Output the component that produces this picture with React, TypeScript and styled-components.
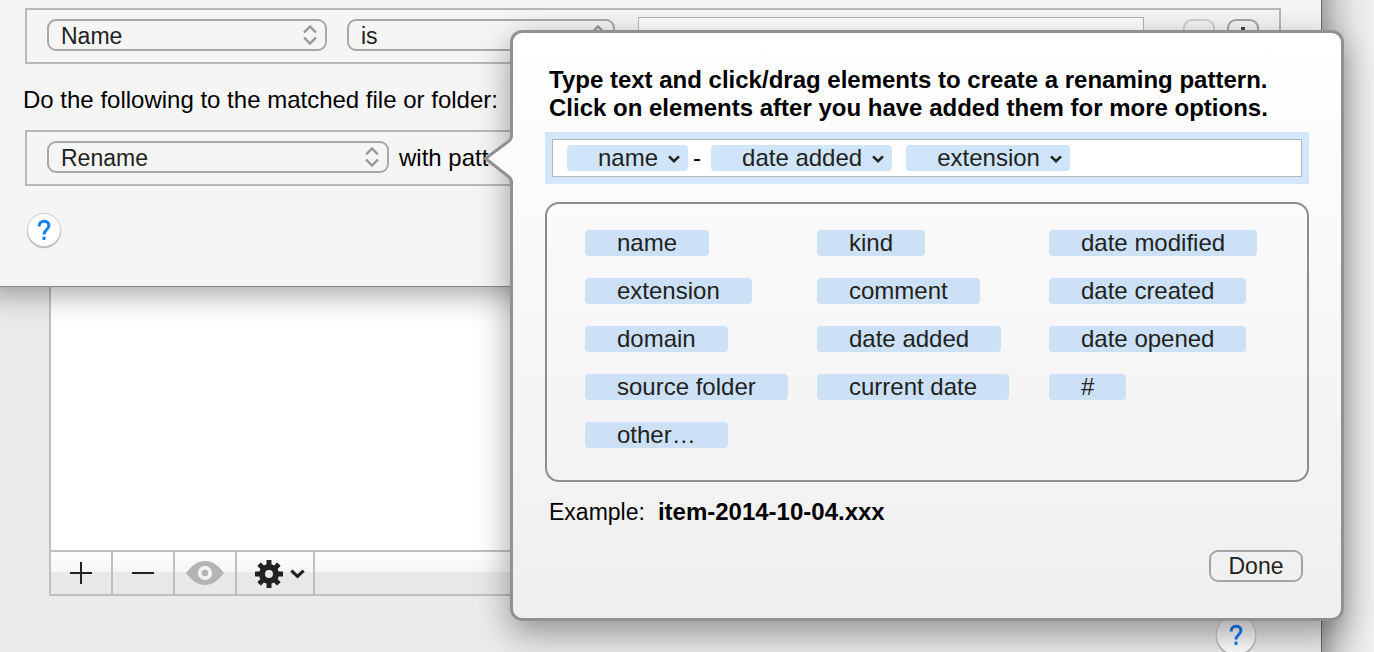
import React from "react";
import styled, { createGlobalStyle } from "styled-components";

const GlobalStyle = createGlobalStyle`
  *, *::before, *::after { box-sizing: border-box; }
  body {
    margin: 0;
    font-family: "Liberation Sans", Arial, Helvetica, sans-serif;
    font-size: 24px;
    line-height: 28px;
    color: #000;
    background: #f3f3f3;
  }
  button, select, input { font: inherit; color: inherit; margin: 0; }
`;

const Desktop = styled.div`
  position: relative;
  display: flex;
  min-height: 100vh;
  padding-right: 52px;
  overflow: hidden;
  background: linear-gradient(to left, #f1f1f1 0, #e6e6e6 20px, #d0d0d0 36px, #a8a8a8 52px);
`;

const Window = styled.main`
  display: flex;
  flex: 1;
  flex-direction: column;
  min-width: 0;
  overflow: hidden;
  background: #ebebeb;
  border-right: 1px solid #6e6e6e;
`;

const Sheet = styled.section`
  position: relative;
  padding: 8px 40px 39px 22px;
  background: #f5f5f5;
  border-bottom: 1px solid #8a8a8a;
  box-shadow: 0 -14px 30px 20px rgba(0, 0, 0, 0.38);
`;

const RuleBox = styled.div`
  display: flex;
  align-items: center;
  height: 56px;
  margin-left: 3px;
  padding: 0 20px 2px;
  border: 2px solid #b8b8b8;
  white-space: nowrap;
`;

const SheetLabel = styled.p`
  margin: 22px 0 16px 1px;
`;

const PopUpFrame = styled.span<{ $width: number }>`
  position: relative;
  flex: none;
  width: ${(p) => p.$width}px;
  height: 32px;
  margin-right: ${(p) => (p.$width > 300 ? 10 : 20)}px;
`;

const PopUpSelect = styled.select`
  display: block;
  width: 100%;
  height: 32px;
  padding: 2px 40px 0 12px;
  appearance: none;
  font-size: 23px;
  line-height: 26px;
  color: #222;
  background: transparent;
  border: 2px solid #a9a9a9;
  border-radius: 9px;
`;

const PopUpArrows = styled.svg`
  position: absolute;
  top: 6px;
  right: 10px;
  width: 14px;
  height: 20px;
  pointer-events: none;
`;

const RuleText = styled.span`
  padding-top: 2px;
`;

const ValueInput = styled.input`
  flex: 1;
  min-width: 0;
  height: 36px;
  margin: 0 39px 0 3px;
  padding: 0 8px;
  background: #fff;
  border: 1px solid #b5b5b5;
`;

const RuleButton = styled.button<{ $faint?: boolean }>`
  display: grid;
  place-items: center;
  flex: none;
  width: 32px;
  height: 32px;
  margin-right: ${(p) => (p.$faint ? 12 : 0)}px;
  padding: 0;
  background: transparent;
  border: 2px solid ${(p) => (p.$faint ? "#cfcfcf" : "#a6a6a6")};
  border-radius: 9px;
`;

const HelpButton = styled.button<{ $size: number }>`
  display: grid;
  place-items: center;
  flex: none;
  width: ${(p) => p.$size}px;
  height: ${(p) => p.$size}px;
  padding: 0;
  background: #fff;
  border: 1px solid #cfcfcf;
  border-radius: 50%;
  box-shadow: 0 1px 1px rgba(0, 0, 0, 0.3);
`;

const SheetHelp = styled.div`
  margin: 27px 0 0 5px;
`;

const ListPane = styled.div`
  flex: 1;
  min-height: 263px;
  margin: 0 40px 0 49px;
  background: #fff;
  border: solid #bfbfbf;
  border-width: 0 2px;
`;

const Toolbar = styled.div`
  display: flex;
  height: 46px;
  margin: 0 40px 0 49px;
  border: 2px solid #bfbfbf;
  background: linear-gradient(#fdfdfd 0, #f6f6f6 20px, #e8e8e8 20px, #e8e8e8 100%);
`;

const ToolButton = styled.button<{ $wide?: boolean }>`
  display: flex;
  align-items: center;
  justify-content: center;
  gap: 7px;
  width: ${(p) => (p.$wide ? 78 : 62)}px;
  padding: ${(p) => (p.$wide ? "2px 0 0 10px" : "0")};
  background: transparent;
  border: 0;
  border-right: 2px solid #bfbfbf;
`;

const Footer = styled.footer`
  display: flex;
  justify-content: flex-end;
  height: 56px;
  padding: 19px 65px 0 0;
  overflow: hidden;
`;

const Popover = styled.section`
  position: absolute;
  top: 30px;
  left: 510px;
  right: 30px;
  padding: 33px 32px 36px;
  background: linear-gradient(#fff, #efefef);
  background-clip: padding-box;
  border: 3px solid #919191;
  border-radius: 12px;
  box-shadow: 0 12px 34px rgba(0, 0, 0, 0.38);
`;

const PopoverArrow = styled.svg`
  position: absolute;
  top: 98px;
  left: -30px;
  width: 31px;
  height: 56px;
`;

const Heading = styled.h1`
  margin: 0 0 10px 4px;
  font-size: 24px;
  line-height: 28px;
  font-weight: bold;
  white-space: nowrap;
`;

const PatternHalo = styled.div`
  padding: 7px;
  background: #d4e6fc;
`;

const PatternField = styled.div`
  display: flex;
  align-items: center;
  height: 38px;
  padding-left: 14px;
  background: #fff;
  border: 1px solid #b5b5b5;
`;

const Token = styled.button`
  display: flex;
  align-items: center;
  gap: 10px;
  height: 26px;
  padding: 0 8px 0 31px;
  line-height: 26px;
  color: #222;
  white-space: nowrap;
  background: #d0e5f9;
  border: 0;
  border-radius: 4px;

  svg { margin-top: 2px; }
`;

const Separator = styled.span`
  width: 23px;
  padding-left: 5px;
  line-height: 26px;
`;

const TokenGap = styled.span`
  width: 14px;
`;

const PatternInput = styled.input`
  flex: 1;
  min-width: 0;
  height: 30px;
  padding: 0 4px;
  background: transparent;
  border: 0;
  outline: 0;
`;

const Palette = styled.div`
  display: grid;
  grid-template-columns: repeat(3, 1fr);
  row-gap: 22px;
  margin-top: 18px;
  padding: 26px 26px 32px 38px;
  border: 2px solid #8d8d8d;
  border-radius: 14px;
`;

const Chip = styled.button`
  justify-self: start;
  height: 26px;
  padding: 0 32px;
  line-height: 26px;
  color: #222;
  white-space: nowrap;
  background: #cce1f5;
  border: 0;
  border-radius: 4px;
`;

const Example = styled.p`
  display: flex;
  gap: 13px;
  margin: 16px 0 24px 4px;
  font-size: 23px;
`;

const ExampleName = styled.strong`
  font-size: 24px;
`;

const Actions = styled.div`
  display: flex;
  justify-content: flex-end;
  padding-right: 6px;
`;

const DoneButton = styled.button`
  width: 94px;
  height: 32px;
  padding: 0;
  font-size: 23px;
  line-height: 28px;
  color: #222;
  background: transparent;
  border: 2px solid #a5a5a5;
  border-radius: 9px;
`;

const CHIPS = [
  "name", "kind", "date modified",
  "extension", "comment", "date created",
  "domain", "date added", "date opened",
  "source folder", "current date", "#",
  "other…",
];

const TEETH = [0, 45, 90, 135, 180, 225, 270, 315];

function PopUp({ label, value, width }: { label: string; value: string; width: number }) {
  return (
    <PopUpFrame $width={width}>
      <PopUpSelect aria-label={label} defaultValue={value}>
        <option>{value}</option>
      </PopUpSelect>
      <PopUpArrows viewBox="0 0 14 20" fill="none" stroke="#969696" strokeWidth="2.400">
        <path d="M1 7.500 7 1.500l6 6M1 12.500l6 6 6-6" />
      </PopUpArrows>
    </PopUpFrame>
  );
}

function Help({ size }: { size: number }) {
  return (
    <HelpButton $size={size} aria-label="Help">
      <svg width="16" height="24" viewBox="0 0 16 24" fill="none" stroke="#147efb" strokeWidth="3">
        <path d="M3.200 8.500V7.800C3.200 5 5.200 3.300 8 3.300s4.900 1.600 4.900 4.200c0 4-4.900 4.500-4.900 9" />
        <path d="M8 18.600v3.400" />
      </svg>
    </HelpButton>
  );
}

function Chevron({ width }: { width: number }) {
  return (
    <svg width={width} height={width / 2 + 2} viewBox="0 0 14 9" fill="none" stroke="#222" strokeWidth="3">
      <path d="M1.200 1.500 7 7l5.800-5.500" />
    </svg>
  );
}

function Gear() {
  return (
    <svg width="28" height="28" viewBox="-14 -14 28 28" fill="#222">
      {TEETH.map((angle) => (
        <rect key={angle} x="-2.500" y="-14" width="5" height="8" rx="0.500" transform={`rotate(${angle})`} />
      ))}
      <circle r="7" fill="none" stroke="#222" strokeWidth="6" />
    </svg>
  );
}

export default function App() {
  return (
    <>
      <GlobalStyle />
      <Desktop>
        <Window>
          <Sheet>
            <RuleBox>
              <PopUp label="Attribute" value="Name" width={280} />
              <PopUp label="Comparison" value="is" width={268} />
              <ValueInput aria-label="Value" />
              <RuleButton $faint aria-label="Remove condition" />
              <RuleButton aria-label="Add condition">
                <svg width="16" height="16" viewBox="0 0 16 16" stroke="#444" strokeWidth="4">
                  <path d="M8 0v16M0 8h16" />
                </svg>
              </RuleButton>
            </RuleBox>
            <SheetLabel>Do the following to the matched file or folder:</SheetLabel>
            <RuleBox>
              <PopUp label="Action" value="Rename" width={342} />
              <RuleText>with pattern:</RuleText>
            </RuleBox>
            <SheetHelp>
              <Help size={34} />
            </SheetHelp>
          </Sheet>
          <ListPane />
          <Toolbar>
            <ToolButton aria-label="Add rule">
              <svg width="22" height="22" viewBox="0 0 22 22" stroke="#222" strokeWidth="2">
                <path d="M11 0v22M0 11h22" />
              </svg>
            </ToolButton>
            <ToolButton aria-label="Remove rule">
              <svg width="22" height="22" viewBox="0 0 22 22" stroke="#222" strokeWidth="2">
                <path d="M0 11h22" />
              </svg>
            </ToolButton>
            <ToolButton aria-label="Preview">
              <svg width="38" height="24" viewBox="0 0 38 24">
                <path d="M0 12C6 4 12 0 19 0s13 4 19 12c-6 8-12 12-19 12S6 20 0 12z" fill="#b4b4b4" />
                <circle cx="19" cy="12" r="5.200" fill="#b4b4b4" stroke="#f2f2f2" strokeWidth="4" />
              </svg>
            </ToolButton>
            <ToolButton $wide aria-label="Rule actions">
              <Gear />
              <Chevron width={15} />
            </ToolButton>
          </Toolbar>
          <Footer>
            <Help size={40} />
          </Footer>
        </Window>

        <Popover role="dialog" aria-label="Renaming pattern">
          <PopoverArrow viewBox="0 0 31 56">
            <path d="M31 5 27 9 1.500 27.500 27 47l4 4z" fill="#fcfcfc" />
            <path d="M28.500 0v4Q28.500 8 26 10L2.500 27.500 26 46Q28.500 48 28.500 52v4" fill="none" stroke="#919191" strokeWidth="3" />
          </PopoverArrow>
          <Heading>
            Type text and click/drag elements to create a renaming pattern.
            <br />
            Click on elements after you have added them for more options.
          </Heading>
          <PatternHalo>
            <PatternField>
              <Token>name<Chevron width={12} /></Token>
              <Separator>-</Separator>
              <Token>date added<Chevron width={12} /></Token>
              <TokenGap />
              <Token>extension<Chevron width={12} /></Token>
              <PatternInput aria-label="Pattern text" />
            </PatternField>
          </PatternHalo>
          <Palette>
            {CHIPS.map((chip) => (
              <Chip key={chip}>{chip}</Chip>
            ))}
          </Palette>
          <Example>
            Example: <ExampleName>item-2014-10-04.xxx</ExampleName>
          </Example>
          <Actions>
            <DoneButton>Done</DoneButton>
          </Actions>
        </Popover>
      </Desktop>
    </>
  );
}
